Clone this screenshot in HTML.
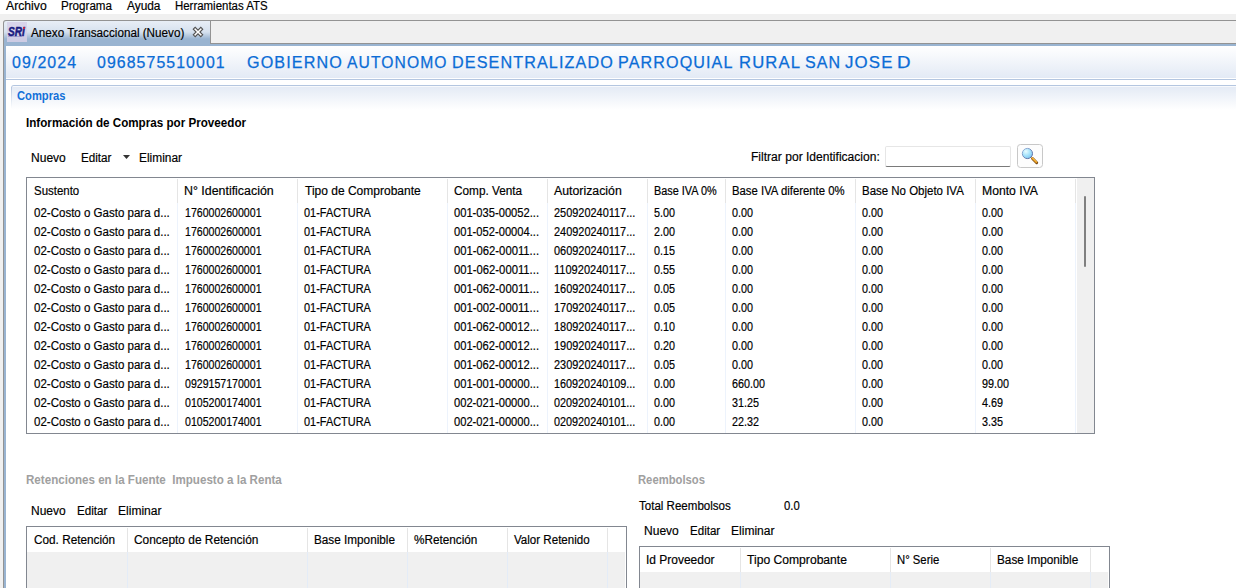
<!DOCTYPE html>
<html><head><meta charset="utf-8"><title>Anexo Transaccional</title>
<style>
html,body{margin:0;padding:0;background:#fff;overflow:hidden;}
body{width:1236px;height:588px;position:relative;overflow:hidden;font-family:"Liberation Sans",sans-serif;font-size:12px;color:#000;}
.t{-webkit-text-stroke:0.18px currentColor;position:absolute;white-space:nowrap;line-height:14px;height:14px;font-size:12px;transform-origin:0 0;}
.abs{position:absolute;}
.hd{letter-spacing:1.1px;color:#0a6cd6;-webkit-text-stroke:0.25px #0a6cd6;font-size:16px;line-height:17px;height:17px;}
.b{font-weight:bold;-webkit-text-stroke:0;}
.g{color:#a0a0a0;font-weight:bold;-webkit-text-stroke:0;}
.blue{color:#1270d8;font-weight:bold;-webkit-text-stroke:0;}
.vs{position:absolute;width:1px;background:#e5e5e5;}
.vf{position:absolute;width:1px;background:#edf3fc;}
</style></head><body>
<div class="abs" style="left:0;top:14px;width:1236px;height:30px;background:#f0f0f0"></div>
<div class="abs" style="left:210px;top:20px;width:1026px;height:1px;background:#939393"></div>
<div class="abs" style="left:3px;top:43px;width:1233px;height:1px;background:#939393"></div>
<div class="abs" style="left:3px;top:44px;width:1233px;height:2px;background:#99b4d1"></div>
<div class="abs" style="left:3px;top:20px;width:208px;height:24px;box-sizing:border-box;border:1px solid #939393;border-bottom:none;border-radius:3px 0 0 0;background:linear-gradient(#e8eef6,#d6e1ee 48%,#99b4d1 78%)"></div>
<div class="abs" style="left:7px;top:22px;width:20px;height:20px;background:rgba(214,208,232,0.85)"></div>
<span class="t" style="left:7.8px;top:25px;font-weight:bold;font-style:italic;font-size:12px;color:#191a80;-webkit-text-stroke:0.5px #191a80;transform:scaleX(0.84)">SRi</span>
<div class="abs" style="left:23.4px;top:26.5px;width:2px;height:2px;border-radius:1px;background:#e82030"></div>
<div class="abs" style="left:8px;top:36px;width:14px;height:1px;background:rgba(60,60,160,0.3)"></div>
<svg class="abs" style="left:192px;top:26px" width="12" height="12" viewBox="0 0 12 12"><path d="M1.3 3.2 L3.2 1.3 L6.0 4.1 L8.8 1.3 L10.7 3.2 L7.9 6.0 L10.7 8.8 L8.8 10.7 L6.0 7.9 L3.2 10.7 L1.3 8.8 L4.1 6.0 Z" fill="#fff" stroke="#505050" stroke-width="1.1" stroke-linejoin="miter"/></svg>
<div class="abs" style="left:0;top:14px;width:3px;height:574px;background:#f0f0f0"></div>
<div class="abs" style="left:3px;top:44px;width:1px;height:544px;background:#939393"></div>
<div class="abs" style="left:4px;top:46px;width:2px;height:542px;background:#99b4d1"></div>
<div class="abs" style="left:6px;top:46px;width:1230px;height:32px;background:linear-gradient(#ffffff,#e3eaf5)"></div>
<div class="abs" style="left:6px;top:79px;width:1230px;height:1px;background:#b4c6e0"></div>
<div class="abs" style="left:11px;top:85px;width:1225px;height:24px;border-top:1px solid #b4c6e0;border-radius:3px 0 0 0;background:linear-gradient(#e3eaf5,#ffffff)"></div>
<div class="abs" style="left:11px;top:87px;width:1px;height:22px;background:linear-gradient(#b4c6e0,#ffffff)"></div>
<div class="abs" style="left:13px;top:86px;width:1223px;height:1px;background:rgba(255,255,255,0.7)"></div>
<svg class="abs" style="left:123px;top:155px" width="7" height="4" viewBox="0 0 7 4"><path d="M0 0 H7 L3.5 4 Z" fill="#333"/></svg>
<div class="abs" style="left:885px;top:146px;width:126px;height:21px;box-sizing:border-box;border:1px solid #e6e6e6;border-bottom:1px solid #7a7a7a;border-radius:2px;background:#fff"></div>
<div class="abs" style="left:1017px;top:144px;width:26px;height:24px;box-sizing:border-box;border:1px solid #c8c8c8;border-radius:3.5px;background:#fdfdfd"></div>
<svg class="abs" style="left:1017px;top:144px" width="26" height="24" viewBox="0 0 26 24"><defs><radialGradient id="lg" cx="0.36" cy="0.3" r="0.8"><stop offset="0" stop-color="#eafcff"/><stop offset="0.5" stop-color="#a6e3fb"/><stop offset="1" stop-color="#78c0f0"/></radialGradient><linearGradient id="ls" x1="0" y1="0" x2="1" y2="1"><stop offset="0" stop-color="#9cbce4"/><stop offset="1" stop-color="#4a5a90"/></linearGradient></defs><path d="M15.5 14.5 L19.7 18.7" stroke="#7c4c12" stroke-width="2.9" stroke-linecap="round"/><path d="M15.3 14.1 L19.3 18.1" stroke="#f0a424" stroke-width="1.6" stroke-linecap="round"/><path d="M15.6 13.8 L19.2 17.4" stroke="#ffd468" stroke-width="0.6" stroke-linecap="round"/><circle cx="10.4" cy="9.5" r="5.1" fill="url(#lg)" stroke="url(#ls)" stroke-width="1"/></svg>
<div class="abs" style="left:26px;top:177px;width:1069px;height:257px;box-sizing:border-box;border:1px solid #828790;background:#fff"></div>
<div class="vs" style="left:177px;top:179px;height:24px"></div>
<div class="vf" style="left:177px;top:203px;height:230px"></div>
<div class="vs" style="left:297px;top:179px;height:24px"></div>
<div class="vf" style="left:297px;top:203px;height:230px"></div>
<div class="vs" style="left:447px;top:179px;height:24px"></div>
<div class="vf" style="left:447px;top:203px;height:230px"></div>
<div class="vs" style="left:547px;top:179px;height:24px"></div>
<div class="vf" style="left:547px;top:203px;height:230px"></div>
<div class="vs" style="left:647px;top:179px;height:24px"></div>
<div class="vf" style="left:647px;top:203px;height:230px"></div>
<div class="vs" style="left:725px;top:179px;height:24px"></div>
<div class="vf" style="left:725px;top:203px;height:230px"></div>
<div class="vs" style="left:855px;top:179px;height:24px"></div>
<div class="vf" style="left:855px;top:203px;height:230px"></div>
<div class="vs" style="left:975px;top:179px;height:24px"></div>
<div class="vf" style="left:975px;top:203px;height:230px"></div>
<div class="vs" style="left:1075px;top:179px;height:24px"></div>
<div class="vf" style="left:1075px;top:203px;height:230px"></div>
<div class="abs" style="left:1077px;top:178px;width:17px;height:255px;background:#f0f0f0"></div>
<div class="abs" style="left:1084px;top:196px;width:2px;height:71px;border-radius:1px;background:#808080"></div>
<div class="abs" style="left:26px;top:526px;width:601px;height:62px;box-sizing:border-box;border:1px solid #828790;border-bottom:none;background:#f0f0f0;box-shadow:inset -1px 0 0 #fff"></div>
<div class="abs" style="left:27px;top:527px;width:599px;height:25px;background:#fff"></div>
<div class="vs" style="left:127px;top:528px;height:24px"></div>
<div class="vf" style="left:127px;top:552px;height:36px;background:#e4ecf7"></div>
<div class="vs" style="left:307px;top:528px;height:24px"></div>
<div class="vf" style="left:307px;top:552px;height:36px;background:#e4ecf7"></div>
<div class="vs" style="left:407px;top:528px;height:24px"></div>
<div class="vf" style="left:407px;top:552px;height:36px;background:#e4ecf7"></div>
<div class="vs" style="left:507px;top:528px;height:24px"></div>
<div class="vf" style="left:507px;top:552px;height:36px;background:#e4ecf7"></div>
<div class="vs" style="left:607px;top:528px;height:24px"></div>
<div class="vf" style="left:607px;top:552px;height:36px;background:#e4ecf7"></div>
<div class="abs" style="left:639px;top:546px;width:471px;height:42px;box-sizing:border-box;border:1px solid #828790;border-bottom:none;background:#f0f0f0;box-shadow:inset -1px 0 0 #fff"></div>
<div class="abs" style="left:640px;top:547px;width:469px;height:25px;background:#fff"></div>
<div class="vs" style="left:740px;top:548px;height:24px"></div>
<div class="vf" style="left:740px;top:572px;height:16px;background:#e4ecf7"></div>
<div class="vs" style="left:890px;top:548px;height:24px"></div>
<div class="vf" style="left:890px;top:572px;height:16px;background:#e4ecf7"></div>
<div class="vs" style="left:990px;top:548px;height:24px"></div>
<div class="vf" style="left:990px;top:572px;height:16px;background:#e4ecf7"></div>
<div class="vs" style="left:1090px;top:548px;height:24px"></div>
<div class="vf" style="left:1090px;top:572px;height:16px;background:#e4ecf7"></div>
<span class="t" style="left:5.70px;top:-1px;transform:scaleX(1.0164)">Archivo</span>
<span class="t" style="left:61.10px;top:-1px;transform:scaleX(0.9677)">Programa</span>
<span class="t" style="left:126.90px;top:-1px;transform:scaleX(0.9902)">Ayuda</span>
<span class="t" style="left:175.20px;top:-1px;transform:scaleX(0.9530)">Herramientas ATS</span>
<span class="t" style="left:31.10px;top:26px;transform:scaleX(0.9738)">Anexo Transaccional (Nuevo)</span>
<span class="t hd" style="left:12.40px;top:54px;transform:scaleX(0.9948)">09/2024</span>
<span class="t hd" style="left:96.90px;top:54px;transform:scaleX(0.9901)">0968575510001</span>
<div><span class="t hd" style="left:247.40px;top:54px;transform:scaleX(1.0087)">GOBIERNO</span> <span class="t hd" style="left:347.40px;top:54px;transform:scaleX(0.9784)">AUTONOMO</span> <span class="t hd" style="left:452.39px;top:54px;transform:scaleX(1.0097)">DESENTRALIZADO</span> <span class="t hd" style="left:618.39px;top:54px;transform:scaleX(1.0068)">PARROQUIAL</span> <span class="t hd" style="left:738.96px;top:54px;transform:scaleX(1.0392)">RURAL</span> <span class="t hd" style="left:805.20px;top:54px;transform:scaleX(1.0016)">SAN</span> <span class="t hd" style="left:845.00px;top:54px;transform:scaleX(1.0514)">JOSE</span> <span class="t hd" style="left:896.73px;top:54px;transform:scaleX(1.1700)">D</span></div>
<span class="t blue" style="left:16.70px;top:89px;transform:scaleX(0.9324)">Compras</span>
<span class="t b" style="left:25.90px;top:116px;transform:scaleX(0.9707)">Información de Compras por Proveedor</span>
<span class="t" style="left:31.10px;top:151px;transform:scaleX(1.0025)">Nuevo</span>
<span class="t" style="left:80.70px;top:151px;transform:scaleX(0.9728)">Editar</span>
<span class="t" style="left:139.10px;top:151px;transform:scaleX(0.9920)">Eliminar</span>
<span class="t" style="left:751.10px;top:150px;transform:scaleX(1.0061)">Filtrar por Identificacion:</span>
<span class="t" style="left:34.10px;top:184px;transform:scaleX(0.9540)">Sustento</span>
<span class="t" style="left:184.10px;top:184px;transform:scaleX(1.0329)">N° Identificación</span>
<span class="t" style="left:304.60px;top:184px;transform:scaleX(1.0004)">Tipo de Comprobante</span>
<span class="t" style="left:453.70px;top:184px;transform:scaleX(0.9828)">Comp. Venta</span>
<span class="t" style="left:553.60px;top:184px;transform:scaleX(1.0266)">Autorización</span>
<span class="t" style="left:654.10px;top:184px;transform:scaleX(0.9067)">Base IVA 0%</span>
<span class="t" style="left:731.90px;top:184px;transform:scaleX(0.9444)">Base IVA diferente 0%</span>
<span class="t" style="left:861.90px;top:184px;transform:scaleX(0.9559)">Base No Objeto IVA</span>
<span class="t" style="left:981.90px;top:184px;transform:scaleX(1.0157)">Monto IVA</span>
<span class="t" style="left:34.10px;top:206px;transform:scaleX(0.9605)">02-Costo o Gasto para d...</span>
<span class="t" style="left:184.60px;top:206px;transform:scaleX(0.8819)">1760002600001</span>
<span class="t" style="left:303.70px;top:206px;transform:scaleX(0.9121)">01-FACTURA</span>
<span class="t" style="left:453.70px;top:206px;transform:scaleX(0.9300)">001-035-00052...</span>
<span class="t" style="left:554.10px;top:206px;transform:scaleX(0.9115)">250920240117...</span>
<span class="t n" style="left:654.10px;top:206px;transform:scaleX(0.8990)">5.00</span>
<span class="t n" style="left:731.90px;top:206px;transform:scaleX(0.8990)">0.00</span>
<span class="t n" style="left:861.90px;top:206px;transform:scaleX(0.8990)">0.00</span>
<span class="t n" style="left:981.90px;top:206px;transform:scaleX(0.8990)">0.00</span>
<span class="t" style="left:34.10px;top:225px;transform:scaleX(0.9605)">02-Costo o Gasto para d...</span>
<span class="t" style="left:184.60px;top:225px;transform:scaleX(0.8819)">1760002600001</span>
<span class="t" style="left:303.70px;top:225px;transform:scaleX(0.9121)">01-FACTURA</span>
<span class="t" style="left:453.70px;top:225px;transform:scaleX(0.9300)">001-052-00004...</span>
<span class="t" style="left:554.10px;top:225px;transform:scaleX(0.9115)">240920240117...</span>
<span class="t n" style="left:654.10px;top:225px;transform:scaleX(0.8990)">2.00</span>
<span class="t n" style="left:731.90px;top:225px;transform:scaleX(0.8990)">0.00</span>
<span class="t n" style="left:861.90px;top:225px;transform:scaleX(0.8990)">0.00</span>
<span class="t n" style="left:981.90px;top:225px;transform:scaleX(0.8990)">0.00</span>
<span class="t" style="left:34.10px;top:244px;transform:scaleX(0.9605)">02-Costo o Gasto para d...</span>
<span class="t" style="left:184.60px;top:244px;transform:scaleX(0.8819)">1760002600001</span>
<span class="t" style="left:303.70px;top:244px;transform:scaleX(0.9121)">01-FACTURA</span>
<span class="t" style="left:453.70px;top:244px;transform:scaleX(0.9392)">001-062-00011...</span>
<span class="t" style="left:554.10px;top:244px;transform:scaleX(0.9115)">060920240117...</span>
<span class="t n" style="left:654.10px;top:244px;transform:scaleX(0.8990)">0.15</span>
<span class="t n" style="left:731.90px;top:244px;transform:scaleX(0.8990)">0.00</span>
<span class="t n" style="left:861.90px;top:244px;transform:scaleX(0.8990)">0.00</span>
<span class="t n" style="left:981.90px;top:244px;transform:scaleX(0.8990)">0.00</span>
<span class="t" style="left:34.10px;top:263px;transform:scaleX(0.9605)">02-Costo o Gasto para d...</span>
<span class="t" style="left:184.60px;top:263px;transform:scaleX(0.8819)">1760002600001</span>
<span class="t" style="left:303.70px;top:263px;transform:scaleX(0.9121)">01-FACTURA</span>
<span class="t" style="left:453.70px;top:263px;transform:scaleX(0.9392)">001-062-00011...</span>
<span class="t" style="left:554.10px;top:263px;transform:scaleX(0.9207)">110920240117...</span>
<span class="t n" style="left:654.10px;top:263px;transform:scaleX(0.8990)">0.55</span>
<span class="t n" style="left:731.90px;top:263px;transform:scaleX(0.8990)">0.00</span>
<span class="t n" style="left:861.90px;top:263px;transform:scaleX(0.8990)">0.00</span>
<span class="t n" style="left:981.90px;top:263px;transform:scaleX(0.8990)">0.00</span>
<span class="t" style="left:34.10px;top:282px;transform:scaleX(0.9605)">02-Costo o Gasto para d...</span>
<span class="t" style="left:184.60px;top:282px;transform:scaleX(0.8819)">1760002600001</span>
<span class="t" style="left:303.70px;top:282px;transform:scaleX(0.9121)">01-FACTURA</span>
<span class="t" style="left:453.70px;top:282px;transform:scaleX(0.9392)">001-062-00011...</span>
<span class="t" style="left:554.10px;top:282px;transform:scaleX(0.9115)">160920240117...</span>
<span class="t n" style="left:654.10px;top:282px;transform:scaleX(0.8990)">0.05</span>
<span class="t n" style="left:731.90px;top:282px;transform:scaleX(0.8990)">0.00</span>
<span class="t n" style="left:861.90px;top:282px;transform:scaleX(0.8990)">0.00</span>
<span class="t n" style="left:981.90px;top:282px;transform:scaleX(0.8990)">0.00</span>
<span class="t" style="left:34.10px;top:301px;transform:scaleX(0.9605)">02-Costo o Gasto para d...</span>
<span class="t" style="left:184.60px;top:301px;transform:scaleX(0.8819)">1760002600001</span>
<span class="t" style="left:303.70px;top:301px;transform:scaleX(0.9121)">01-FACTURA</span>
<span class="t" style="left:453.70px;top:301px;transform:scaleX(0.9392)">001-002-00011...</span>
<span class="t" style="left:554.10px;top:301px;transform:scaleX(0.9115)">170920240117...</span>
<span class="t n" style="left:654.10px;top:301px;transform:scaleX(0.8990)">0.05</span>
<span class="t n" style="left:731.90px;top:301px;transform:scaleX(0.8990)">0.00</span>
<span class="t n" style="left:861.90px;top:301px;transform:scaleX(0.8990)">0.00</span>
<span class="t n" style="left:981.90px;top:301px;transform:scaleX(0.8990)">0.00</span>
<span class="t" style="left:34.10px;top:320px;transform:scaleX(0.9605)">02-Costo o Gasto para d...</span>
<span class="t" style="left:184.60px;top:320px;transform:scaleX(0.8819)">1760002600001</span>
<span class="t" style="left:303.70px;top:320px;transform:scaleX(0.9121)">01-FACTURA</span>
<span class="t" style="left:453.70px;top:320px;transform:scaleX(0.9300)">001-062-00012...</span>
<span class="t" style="left:554.10px;top:320px;transform:scaleX(0.9115)">180920240117...</span>
<span class="t n" style="left:654.10px;top:320px;transform:scaleX(0.8990)">0.10</span>
<span class="t n" style="left:731.90px;top:320px;transform:scaleX(0.8990)">0.00</span>
<span class="t n" style="left:861.90px;top:320px;transform:scaleX(0.8990)">0.00</span>
<span class="t n" style="left:981.90px;top:320px;transform:scaleX(0.8990)">0.00</span>
<span class="t" style="left:34.10px;top:339px;transform:scaleX(0.9605)">02-Costo o Gasto para d...</span>
<span class="t" style="left:184.60px;top:339px;transform:scaleX(0.8819)">1760002600001</span>
<span class="t" style="left:303.70px;top:339px;transform:scaleX(0.9121)">01-FACTURA</span>
<span class="t" style="left:453.70px;top:339px;transform:scaleX(0.9300)">001-062-00012...</span>
<span class="t" style="left:554.10px;top:339px;transform:scaleX(0.9115)">190920240117...</span>
<span class="t n" style="left:654.10px;top:339px;transform:scaleX(0.8990)">0.20</span>
<span class="t n" style="left:731.90px;top:339px;transform:scaleX(0.8990)">0.00</span>
<span class="t n" style="left:861.90px;top:339px;transform:scaleX(0.8990)">0.00</span>
<span class="t n" style="left:981.90px;top:339px;transform:scaleX(0.8990)">0.00</span>
<span class="t" style="left:34.10px;top:358px;transform:scaleX(0.9605)">02-Costo o Gasto para d...</span>
<span class="t" style="left:184.60px;top:358px;transform:scaleX(0.8819)">1760002600001</span>
<span class="t" style="left:303.70px;top:358px;transform:scaleX(0.9121)">01-FACTURA</span>
<span class="t" style="left:453.70px;top:358px;transform:scaleX(0.9300)">001-062-00012...</span>
<span class="t" style="left:554.10px;top:358px;transform:scaleX(0.9115)">230920240117...</span>
<span class="t n" style="left:654.10px;top:358px;transform:scaleX(0.8990)">0.05</span>
<span class="t n" style="left:731.90px;top:358px;transform:scaleX(0.8990)">0.00</span>
<span class="t n" style="left:861.90px;top:358px;transform:scaleX(0.8990)">0.00</span>
<span class="t n" style="left:981.90px;top:358px;transform:scaleX(0.8990)">0.00</span>
<span class="t" style="left:34.10px;top:377px;transform:scaleX(0.9605)">02-Costo o Gasto para d...</span>
<span class="t" style="left:184.60px;top:377px;transform:scaleX(0.8819)">0929157170001</span>
<span class="t" style="left:303.70px;top:377px;transform:scaleX(0.9121)">01-FACTURA</span>
<span class="t" style="left:453.70px;top:377px;transform:scaleX(0.9300)">001-001-00000...</span>
<span class="t" style="left:554.10px;top:377px;transform:scaleX(0.9025)">160920240109...</span>
<span class="t n" style="left:654.10px;top:377px;transform:scaleX(0.8990)">0.00</span>
<span class="t n" style="left:731.90px;top:377px;transform:scaleX(0.8990)">660.00</span>
<span class="t n" style="left:861.90px;top:377px;transform:scaleX(0.8990)">0.00</span>
<span class="t n" style="left:981.90px;top:377px;transform:scaleX(0.8990)">99.00</span>
<span class="t" style="left:34.10px;top:396px;transform:scaleX(0.9605)">02-Costo o Gasto para d...</span>
<span class="t" style="left:184.60px;top:396px;transform:scaleX(0.8819)">0105200174001</span>
<span class="t" style="left:303.70px;top:396px;transform:scaleX(0.9121)">01-FACTURA</span>
<span class="t" style="left:453.70px;top:396px;transform:scaleX(0.9300)">002-021-00000...</span>
<span class="t" style="left:554.10px;top:396px;transform:scaleX(0.9025)">020920240101...</span>
<span class="t n" style="left:654.10px;top:396px;transform:scaleX(0.8990)">0.00</span>
<span class="t n" style="left:731.90px;top:396px;transform:scaleX(0.8990)">31.25</span>
<span class="t n" style="left:861.90px;top:396px;transform:scaleX(0.8990)">0.00</span>
<span class="t n" style="left:981.90px;top:396px;transform:scaleX(0.8990)">4.69</span>
<span class="t" style="left:34.10px;top:415px;transform:scaleX(0.9605)">02-Costo o Gasto para d...</span>
<span class="t" style="left:184.60px;top:415px;transform:scaleX(0.8819)">0105200174001</span>
<span class="t" style="left:303.70px;top:415px;transform:scaleX(0.9121)">01-FACTURA</span>
<span class="t" style="left:453.70px;top:415px;transform:scaleX(0.9300)">002-021-00000...</span>
<span class="t" style="left:554.10px;top:415px;transform:scaleX(0.9025)">020920240101...</span>
<span class="t n" style="left:654.10px;top:415px;transform:scaleX(0.8990)">0.00</span>
<span class="t n" style="left:731.90px;top:415px;transform:scaleX(0.8990)">22.32</span>
<span class="t n" style="left:861.90px;top:415px;transform:scaleX(0.8990)">0.00</span>
<span class="t n" style="left:981.90px;top:415px;transform:scaleX(0.8990)">3.35</span>
<span class="t g" style="left:25.60px;top:473px;transform:scaleX(0.9662)">Retenciones en la Fuente&nbsp; Impuesto a la Renta</span>
<span class="t" style="left:30.70px;top:504px;transform:scaleX(0.9996)">Nuevo</span>
<span class="t" style="left:76.60px;top:504px;transform:scaleX(0.9728)">Editar</span>
<span class="t" style="left:117.70px;top:504px;transform:scaleX(1.0036)">Eliminar</span>
<span class="t" style="left:34.10px;top:533px;transform:scaleX(0.9812)">Cod. Retención</span>
<span class="t" style="left:134.10px;top:533px;transform:scaleX(0.9924)">Concepto de Retención</span>
<span class="t" style="left:314.10px;top:533px;transform:scaleX(0.9790)">Base Imponible</span>
<span class="t" style="left:414.40px;top:533px;transform:scaleX(0.9792)">%Retención</span>
<span class="t" style="left:513.70px;top:533px;transform:scaleX(0.9642)">Valor Retenido</span>
<span class="t g" style="left:638.20px;top:473px;transform:scaleX(0.9375)">Reembolsos</span>
<span class="t" style="left:639.40px;top:499px;transform:scaleX(0.9625)">Total Reembolsos</span>
<span class="t" style="left:784.40px;top:499px;transform:scaleX(0.9407)">0.0</span>
<span class="t" style="left:644.10px;top:524px;transform:scaleX(1.0025)">Nuevo</span>
<span class="t" style="left:689.90px;top:524px;transform:scaleX(0.9633)">Editar</span>
<span class="t" style="left:730.70px;top:524px;transform:scaleX(1.0036)">Eliminar</span>
<span class="t" style="left:646.00px;top:553px;transform:scaleX(0.9984)">Id Proveedor</span>
<span class="t" style="left:746.90px;top:553px;transform:scaleX(1.0104)">Tipo Comprobante</span>
<span class="t" style="left:896.90px;top:553px;transform:scaleX(0.9415)">N° Serie</span>
<span class="t" style="left:996.90px;top:553px;transform:scaleX(0.9814)">Base Imponible</span>
</body></html>
